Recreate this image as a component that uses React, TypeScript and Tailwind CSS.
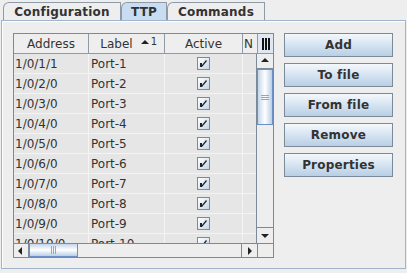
import React from "react";

const rows = [
  ["1/0/1/1", "Port-1"],
  ["1/0/2/0", "Port-2"],
  ["1/0/3/0", "Port-3"],
  ["1/0/4/0", "Port-4"],
  ["1/0/5/0", "Port-5"],
  ["1/0/6/0", "Port-6"],
  ["1/0/7/0", "Port-7"],
  ["1/0/8/0", "Port-8"],
  ["1/0/9/0", "Port-9"],
  ["1/0/10/0", "Port-10"],
];

function Check() {
  return (
    <div className="w-[13px] h-[13px] border border-[#7a8a99] bg-gradient-to-br from-white to-[#c4d6ea] flex items-center justify-center">
      <svg width="9" height="9" viewBox="0 0 9 9">
        <path d="M1 4 L1 8 L3 8 L8 2 L7 1 L3 6 L3 4 Z" fill="#222" />
      </svg>
    </div>
  );
}

function Arrow({ dir }: { dir: "up" | "down" | "left" | "right" }) {
  const d = {
    up: "M0 5 L4 1 L8 5 Z",
    down: "M0 2 L8 2 L4 6 Z",
    left: "M5 0 L5 8 L1 4 Z",
    right: "M2 0 L2 8 L6 4 Z",
  }[dir];
  return (
    <svg width="8" height="8" viewBox="0 0 8 8">
      <path d={d} fill="#222" />
    </svg>
  );
}

function Button({ label }: { label: string }) {
  return (
    <div className="h-[24px] w-[109px] border border-[#7a8a99] bg-gradient-to-b from-[#f4f8fc] to-[#b8cfe5] flex items-center justify-center font-bold text-[12px] tracking-[0.2px] text-[#333]">
      {label}
    </div>
  );
}

export default function App() {
  return (
    <div className="w-[407px] h-[273px] bg-[#eeeeee] text-[#333] text-[12px] font-['DejaVu_Sans',sans-serif] leading-none">
      <div className="flex items-end h-[20px] pl-[3px]">
        <div className="w-[118px] h-[18px] border border-b-0 border-[#8e9aa6] rounded-tl-[6px] bg-[#eeeeee] flex items-center justify-center font-bold text-[12px] tracking-[0.2px]">
          Configuration
        </div>
        <div className="w-[46px] h-[18px] border border-b-0 border-[#8e9aa6] rounded-tl-[6px] bg-[#c8ddf2] flex items-center justify-center font-bold text-[12px] tracking-[0.2px]">
          TTP
        </div>
        <div className="w-[98px] h-[18px] border border-b-0 border-[#8e9aa6] rounded-tl-[6px] bg-[#eeeeee] flex items-center justify-center font-bold text-[12px] tracking-[0.2px]">
          Commands
        </div>
      </div>
      <div className="mx-[1px] h-[249px] border border-[#9fb4cc] shadow-[inset_1px_1px_0_#ffffff] flex pl-[11px] pt-[12px] gap-[10px]">
        <div className="w-[261px] h-[225px] border border-[#7a8a99] flex flex-col bg-[#eeeeee]">
          <div className="flex h-[20px]">
            <div className="w-[243px] flex overflow-hidden">
              <div className="w-[75px] shrink-0 border-r border-b border-[#8e9aa6] flex items-center justify-center">Address</div>
              <div className="w-[76px] shrink-0 border-r border-b border-[#8e9aa6] flex items-center justify-center relative pr-[20px]">
                Label
                <span className="absolute right-[7px] top-[3px] flex items-start gap-[2px] text-[10px]">
                  <svg width="8" height="6" viewBox="0 0 8 6" className="mt-[2px]"><path d="M0 5 L4 1 L8 5 Z" fill="#222" /></svg>1
                </span>
              </div>
              <div className="w-[78px] shrink-0 border-r border-b border-[#8e9aa6] flex items-center justify-center">Active</div>
              <div className="w-[40px] shrink-0 border-b border-[#8e9aa6] flex items-center pl-[1px]">N</div>
            </div>
            <div className="w-[16px] border-l border-b border-[#8e9aa6] bg-[#dfe8f2] flex items-center justify-center gap-[1px]">
              <div className="w-[2px] h-[12px] bg-[#111]" />
              <div className="w-[2px] h-[12px] bg-[#111]" />
              <div className="w-[2px] h-[12px] bg-[#111]" />
            </div>
          </div>
          <div className="flex h-[189px]">
            <div className="w-[242px] overflow-hidden bg-[#e6e6e6]">
              {rows.map(([a, l]) => (
                <div key={a} className="flex h-[20px] border-b border-[#f4f4f4]">
                  <div className="w-[75px] shrink-0 border-r border-[#f4f4f4] flex items-center pl-[1px]">{a}</div>
                  <div className="w-[76px] shrink-0 border-r border-[#f4f4f4] flex items-center pl-[2px]">{l}</div>
                  <div className="w-[78px] shrink-0 border-r border-[#f4f4f4] flex items-center justify-center">
                    <Check />
                  </div>
                  <div className="w-[40px] shrink-0" />
                </div>
              ))}
            </div>
            <div className="w-[17px] flex flex-col border-l border-[#7a8a99]">
              <div className="h-[15px] border-b border-[#7a8a99] bg-[#eeeeee] flex items-center justify-center">
                <Arrow dir="up" />
              </div>
              <div className="h-[56px] border border-[#6d8fc7] bg-gradient-to-r from-[#c4d6ea] via-white to-[#b8cfe5] flex flex-col items-center justify-center gap-[1px]">
                <div className="w-[8px] h-[1px] bg-[#8fa6c8]" />
                <div className="w-[8px] h-[1px] bg-[#8fa6c8]" />
                <div className="w-[8px] h-[1px] bg-[#8fa6c8]" />
              </div>
              <div className="flex-1 bg-[#eeeeee]" />
              <div className="h-[16px] border-t border-[#7a8a99] bg-[#eeeeee] flex items-center justify-center">
                <Arrow dir="down" />
              </div>
            </div>
          </div>
          <div className="flex h-[14px] border-t border-[#7a8a99]">
            <div className="w-[243px] flex">
              <div className="w-[15px] border-r border-[#7a8a99] flex items-center justify-center">
                <Arrow dir="left" />
              </div>
              <div className="w-[49px] border border-[#6d8fc7] border-t-0 bg-gradient-to-b from-[#c4d6ea] via-white to-[#b8cfe5] flex items-center justify-center gap-[1px]">
                <div className="w-[1px] h-[8px] bg-[#8fa6c8]" />
                <div className="w-[1px] h-[8px] bg-[#8fa6c8]" />
                <div className="w-[1px] h-[8px] bg-[#8fa6c8]" />
              </div>
              <div className="flex-1" />
              <div className="w-[16px] border-l border-[#7a8a99] flex items-center justify-center">
                <Arrow dir="right" />
              </div>
            </div>
            <div className="w-[16px] border-l border-[#7a8a99]" />
          </div>
        </div>
        <div className="flex flex-col gap-[6px]">
          <Button label="Add" />
          <Button label="To file" />
          <Button label="From file" />
          <Button label="Remove" />
          <Button label="Properties" />
        </div>
      </div>
    </div>
  );
}
